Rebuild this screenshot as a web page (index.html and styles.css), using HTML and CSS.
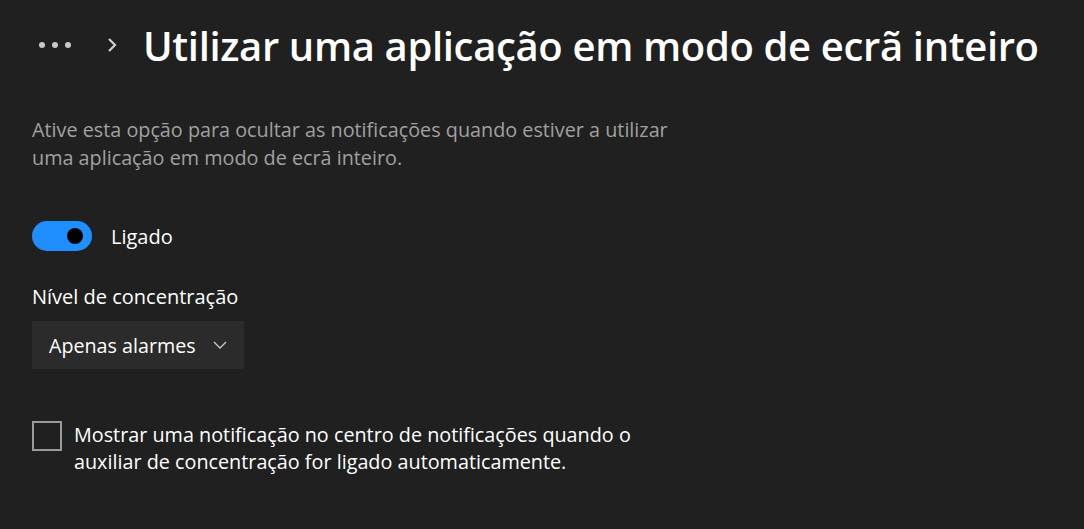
FILE: index.html
```html
<!DOCTYPE html>
<html lang="pt">
<head>
    <meta charset="UTF-8">
    <title>Auxiliar de concentração</title>
    <link rel="stylesheet" href="styles.css">
</head>
<body>
<div class="page">
    <!--cabeçalho-->
    <div class="header">
        <span class="more">
            <svg width="36" height="8" viewBox="0 0 36 8"><circle cx="4" cy="4" r="3"/><circle cx="17" cy="4" r="3"/><circle cx="30" cy="4" r="3"/></svg>
        </span>
        <span class="sep">
            <svg width="12" height="16" viewBox="0 0 12 16"><path d="M3 2 L9 8 L3 14"/></svg>
        </span>
        <h1>Utilizar uma aplicação em modo de ecrã inteiro</h1>
    </div>

    <div class="content">
        <p class="desc">Ative esta opção para ocultar as notificações quando estiver a utilizar uma aplicação em modo de ecrã inteiro.</p>

        <div class="toggle-row">
            <span class="toggle"><span class="knob"></span></span>
            <span class="toggle-label">Ligado</span>
        </div>

        <div class="label">Nível de concentração</div>
        <div class="select">
            <span>Apenas alarmes</span>
            <svg width="14" height="10" viewBox="0 0 14 10"><path d="M1 2 L7 8 L13 2"/></svg>
        </div>

        <div class="check-row">
            <span class="check"></span>
            <span class="check-text">Mostrar uma notificação no centro de notificações quando o auxiliar de concentração for ligado automaticamente.</span>
        </div>
    </div>
</div>
</body>
</html>
```

FILE: styles.css
```css
* {
    margin: 0;
    padding: 0;
}

html, body {
    height: 100%;
}

body {
    background-color: #202020;
    color: #ffffff;
    font-family: "Open Sans", "Noto Sans", sans-serif;
}

.page {
    padding: 0 32px;
}

.header {
    display: flex;
    align-items: center;
    height: 90px;
}

.more svg {
    display: block;
    margin-left: 6px;
    fill: #c8c8c8;
}

.sep svg {
    display: block;
    margin-left: 32px;
    fill: none;
    stroke: #d0d0d0;
    stroke-width: 2.2;
}

h1 {
    margin-left: 25px;
    font-size: 40px;
    font-weight: 600;
    letter-spacing: -0.35px;
    white-space: nowrap;
}

.content {
    padding-top: 26px;
}

.desc {
    width: 650px;
    font-size: 19.8px;
    line-height: 28px;
    color: #a0a0a0;
}

.toggle-row {
    display: flex;
    align-items: center;
    margin-top: 49px;
}

.toggle {
    display: flex;
    align-items: center;
    justify-content: flex-end;
    width: 60px;
    height: 30px;
    border-radius: 15px;
    background-color: #1f8fff;
    box-sizing: border-box;
    padding-right: 9px;
}

.knob {
    width: 16px;
    height: 16px;
    border-radius: 50%;
    background-color: #000000;
}

.toggle-label {
    margin-left: 19px;
    font-size: 20px;
}

.label {
    margin-top: 32px;
    font-size: 20px;
    line-height: 28px;
}

.select {
    display: flex;
    align-items: center;
    width: 212px;
    height: 48px;
    margin-top: 10px;
    padding-left: 17px;
    box-sizing: border-box;
    background-color: #2b2b2b;
    font-size: 19.7px;
}

.select svg {
    margin-left: 17px;
    fill: none;
    stroke: #c8c8c8;
    stroke-width: 1.3;
}

.check-row {
    display: flex;
    align-items: flex-start;
    margin-top: 52px;
}

.check {
    flex: none;
    width: 30px;
    height: 30px;
    box-sizing: border-box;
    border: 2px solid #9a9a9a;
}

.check-text {
    width: 580px;
    margin-left: 12px;
    font-size: 19.8px;
    line-height: 27px;
}
```
